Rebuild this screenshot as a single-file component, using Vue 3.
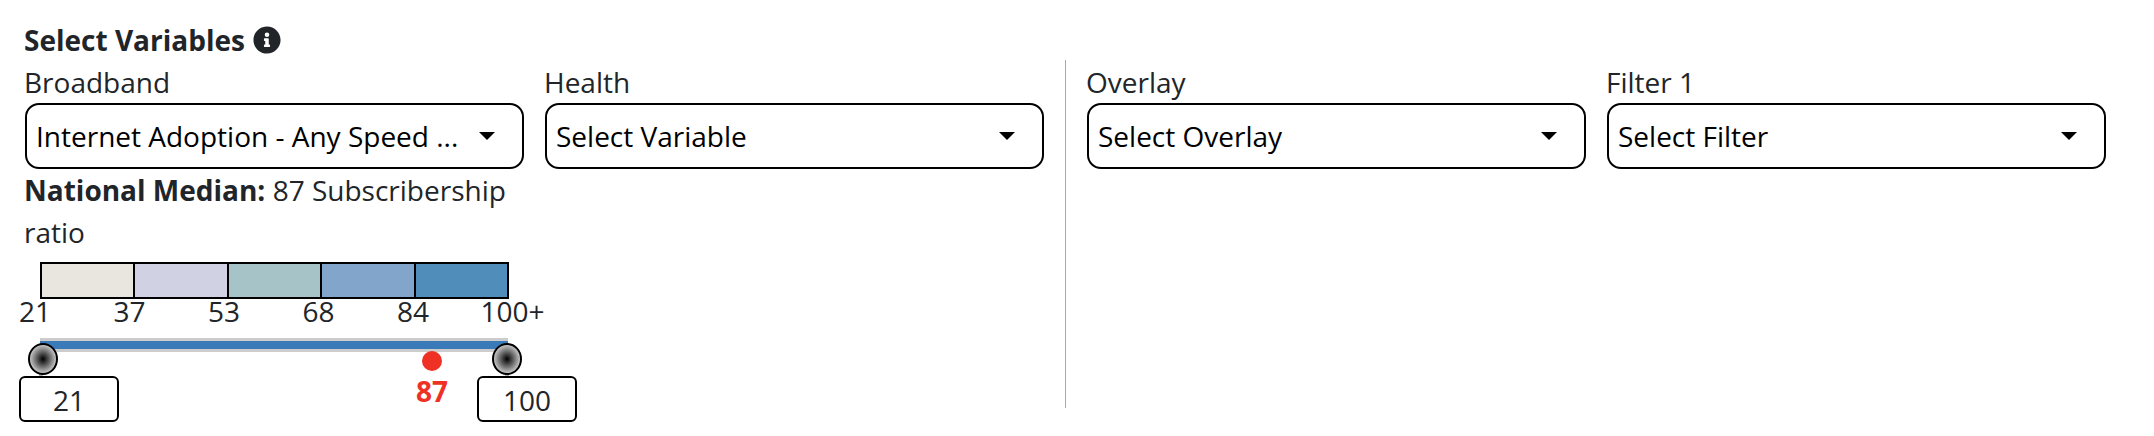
<script setup>
const legend = [
  { color: '#e9e6e0' },
  { color: '#d0d1e3' },
  { color: '#a6c4c8' },
  { color: '#82a6cb' },
  { color: '#508dbb' }
];
const ticks = ['21', '37', '53', '68', '84', '100+'];
</script>

<template>
  <div class="page">
    <h2 class="title">
      Select Variables
      <svg class="info" viewBox="0 0 512 512" aria-hidden="true">
        <path fill="#212529" d="M256 8C119 8 8 119 8 256s111 248 248 248 248-111 248-248S393 8 256 8zm0 110a42 42 0 1 1 0 84 42 42 0 0 1 0-84zm56 254c0 7-5 12-12 12h-88c-7 0-12-5-12-12v-24c0-7 5-12 12-12h12v-64h-12c-7 0-12-5-12-12v-24c0-7 5-12 12-12h64c7 0 12 5 12 12v100h12c7 0 12 5 12 12v24z"/>
      </svg>
    </h2>
    <div class="panels">
      <section class="panel left">
        <div class="field">
          <label>Broadband</label>
          <div class="select"><span>Internet Adoption - Any Speed ...</span><i class="caret"></i></div>
          <p class="median"><strong>National Median:</strong> 87 Subscribership ratio</p>
          <div class="legend">
            <div v-for="l in legend" :key="l.color" class="swatch" :style="{ background: l.color }"></div>
          </div>
          <div class="ticks">
            <span v-for="t in ticks" :key="t">{{ t }}</span>
          </div>
          <div class="range">
            <div class="track"><div class="fill"></div></div>
            <span class="stem stem-min"></span>
            <span class="stem stem-max"></span>
            <span class="handle handle-min"></span>
            <span class="handle handle-max"></span>
            <span class="dot"></span>
            <span class="dot-label">87</span>
            <div class="inputs">
              <div class="box">21</div>
              <div class="box">100</div>
            </div>
          </div>
        </div>
        <div class="field">
          <label>Health</label>
          <div class="select"><span>Select Variable</span><i class="caret"></i></div>
        </div>
      </section>
      <div class="divider"></div>
      <section class="panel right">
        <div class="field">
          <label>Overlay</label>
          <div class="select"><span>Select Overlay</span><i class="caret"></i></div>
        </div>
        <div class="field">
          <label>Filter 1</label>
          <div class="select"><span>Select Filter</span><i class="caret"></i></div>
        </div>
      </section>
    </div>
  </div>
</template>

<style>
html, body { background: #fff; }
</style>

<style scoped>
.page {
  width: 2154px;
  height: 436px;
  box-sizing: border-box;
  padding: 24px 0 0 25px;
  font-family: "Open Sans", sans-serif;
  font-size: 28px;
  color: #212529;
  overflow: hidden;
}
.title {
  margin: 0 0 0 -1px;
  height: 32px;
  line-height: 32px;
  font-size: 28px;
  font-weight: 700;
  display: flex;
  align-items: center;
  gap: 8px;
}
.info { width: 28px; height: 28px; }
.panels {
  display: flex;
  align-items: flex-start;
  margin-top: 4px;
}
.panel {
  display: flex;
  gap: 21px;
}
.field { width: 499px; }
.field label {
  display: block;
  line-height: 44px;
  height: 43px;
  margin-left: -1px;
}
.select {
  height: 66px;
  box-sizing: border-box;
  border: 2px solid #000;
  border-radius: 14px;
  padding: 0 27px 0 9px;
  display: flex;
  align-items: center;
  justify-content: space-between;
  color: #000;
}
.caret {
  width: 0;
  height: 0;
  border-left: 8px solid transparent;
  border-right: 8px solid transparent;
  border-top: 8px solid #000;
}
.median {
  margin: 0 0 0 -1px;
  line-height: 42px;
}
.legend {
  display: flex;
  width: 469px;
  height: 37px;
  margin: 9px 0 0 15px;
  box-sizing: border-box;
  border: 2px solid #000;
}
.swatch {
  flex: 1;
  border-right: 2px solid #000;
}
.swatch:last-child { border-right: 0; }
.ticks {
  display: flex;
  margin: -3px 0 0 -6px;
  line-height: 30px;
  white-space: nowrap;
}
.ticks span { flex: 0 0 94.5px; }
.ticks span:last-child { margin-left: -11px; }
.range {
  position: relative;
  height: 110px;
  margin-top: 12px;
}
.track {
  position: absolute;
  left: 15px;
  width: 468px;
  top: 0;
  height: 14px;
  box-sizing: border-box;
  padding: 3px 0;
  background: linear-gradient(#ccc 0, #ccc 60%, #999 60%, #999 80%, #ccc 80%);
}
.fill {
  height: 8px;
  background: #3a7ab8;
}
.stem {
  position: absolute;
  top: 14px;
  width: 4px;
  height: 28px;
  background: #b5b5b5;
}
.stem-min { left: 14px; }
.stem-max { left: 480px; }
.handle {
  position: absolute;
  top: 5px;
  width: 30px;
  height: 32px;
  box-sizing: border-box;
  border: 2px solid #000;
  border-radius: 50%;
  background: radial-gradient(closest-side, #000 0, #c4c4c4 100%);
}
.handle-min { left: 3px; }
.handle-max { left: 467px; }
.dot {
  position: absolute;
  left: 397px;
  top: 13px;
  width: 20px;
  height: 20px;
  border-radius: 50%;
  background: #ee3124;
}
.dot-label {
  position: absolute;
  left: 382px;
  width: 50px;
  top: 36px;
  text-align: center;
  line-height: 34px;
  font-weight: 700;
  color: #ee3124;
}
.inputs {
  position: absolute;
  left: -6px;
  top: 38px;
  width: 558px;
  display: flex;
  justify-content: space-between;
}
.box {
  width: 100px;
  height: 46px;
  box-sizing: border-box;
  border: 2px solid #000;
  border-radius: 6px;
  background: #fff;
  text-align: center;
  line-height: 44px;
}
.divider {
  width: 1px;
  height: 348px;
  background: #aaa;
  margin: 0 21px;
}
</style>
